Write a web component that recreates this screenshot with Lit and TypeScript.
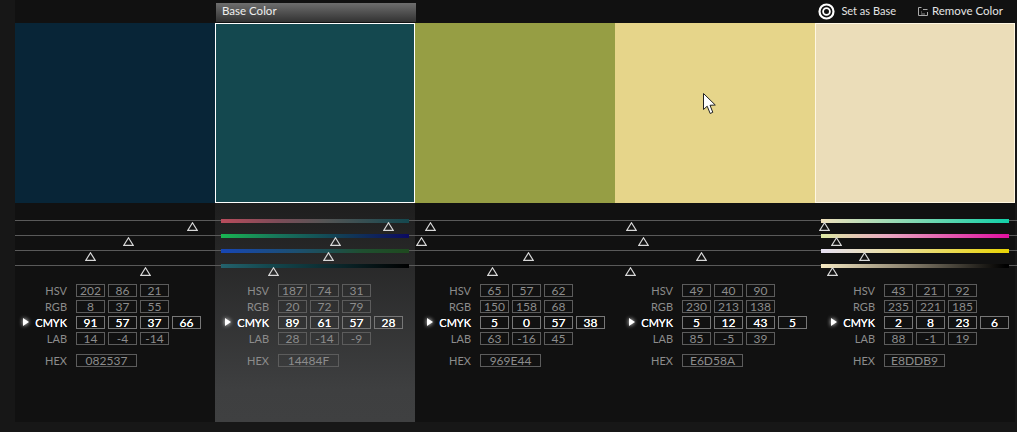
import { LitElement, html, css } from "lit";
import { customElement } from "lit/decorators.js";

interface Swatch {
  color: string;
  cls: string;
  thumbs: number[];
  bars?: string[];
  hsv: string[]; rgb: string[]; cmyk: string[]; lab: string[]; hex: string;
}

const SW: Swatch[] = [
  { color: "#082537", cls: "", thumbs: [177.5, 113.5, 75.5, 130.5], hsv: ["202","86","21"], rgb: ["8","37","55"], cmyk: ["91","57","37","66"], lab: ["14","-4","-14"], hex: "082537" },
  { color: "#14484f", cls: "sel", thumbs: [173.5, 120.5, 113.5, 58.5],
    bars: [
      "linear-gradient(90deg,#b84c5c,#7d4c58 30%,#555 55%,#14484f)",
      "linear-gradient(90deg,#19b552,#17755a 30%,#123c55 65%,#0b0a62)",
      "linear-gradient(90deg,#1746b4,#1c4f70 40%,#1f4f30 75%,#1f4a1f)",
      "linear-gradient(90deg,#24626c,#14484f 25%,#0a2428 65%,#000)",
    ],
    hsv: ["187","74","31"], rgb: ["20","72","79"], cmyk: ["89","61","57","28"], lab: ["28","-14","-9"], hex: "14484F" },
  { color: "#969e44", cls: "", thumbs: [15.5, 6.5, 113, 77], hsv: ["65","57","62"], rgb: ["150","158","68"], cmyk: ["5","0","57","38"], lab: ["63","-16","45"], hex: "969E44" },
  { color: "#e6d58a", cls: "", thumbs: [16, 28.5, 86.5, 15.5], hsv: ["49","40","90"], rgb: ["230","213","138"], cmyk: ["5","12","43","5"], lab: ["85","-5","39"], hex: "E6D58A" },
  { color: "#ebddb9", cls: "hov", thumbs: [9.5, 21.5, 49.5, 17.5],
    bars: [
      "linear-gradient(90deg,#efe0bc,#12d0a8)",
      "linear-gradient(90deg,#dde9a4,#e8a8c0 35%,#e010a0)",
      "linear-gradient(90deg,#e6e0f4,#eadfa8 35%,#e8d404)",
      "linear-gradient(90deg,#f5e8c2,#8c8370 45%,#000 98%)",
    ],
    hsv: ["43","21","92"], rgb: ["235","221","185"], cmyk: ["2","8","23","6"], lab: ["88","-1","19"], hex: "E8DDB9" },
];

@customElement("app-root")
export class AppRoot extends LitElement {
  static styles = css`
    :host {
      display: block;
      width: 1017px;
      height: 432px;
      overflow: hidden;
      background: #171717;
      font-family: Lato, "Open Sans", "Liberation Sans", sans-serif;
      font-size: 12px;
      color: #fff;
    }
    .top {
      height: 23px;
      margin-left: 15px;
      background: #111;
      display: flex;
      align-items: stretch;
    }
    .slot { width: 200px; }
    .tab {
      width: 200px;
      margin: 3px 0 1px 1px;
      box-sizing: border-box;
      padding: 0 0 4px 6px;
      display: flex;
      align-items: center;
      font-size: 11.5px;
      background: linear-gradient(#6e6e6e, #323232);
      color: #eee;
    }
    .actions {
      margin-left: auto;
      padding: 0 14px 1px 0;
      display: flex;
      align-items: center;
      color: #e4e4e4;
      font-size: 11.5px;
    }
    .action { display: flex; align-items: center; }
    .action span { padding-bottom: 2px; }
    .action.base { gap: 6px; margin-right: 22px; font-size: 11px; }
    .action.remove { gap: 4px; }
    .swatches { display: flex; margin-left: 15px; height: 180px; width: 1000px; }
    .swatch { width: 200px; box-sizing: border-box; position: relative; }
    .swatch.sel { border: 1px solid #fff; }
    .swatch.hov { border: 1px solid #fff7e2; }
    .cursor { position: absolute; left: 88px; top: 70px; }
    .cols { display: flex; margin-left: 15px; width: 1000px; height: 219px; background: #111; }
    .col { width: 200px; box-sizing: border-box; padding-top: 16px; }
    .col.sel { background: linear-gradient(#1e1e1e 0, #3e3f40 85%, #3f4041 100%); }
    .sliders { display: flex; flex-direction: column; gap: 12px; height: 60px; }
    .slider { position: relative; height: 3px; display: flex; align-items: center; }
    .line { flex: 1; height: 1px; background: #5a5a5a; }
    .col:last-child .line { margin-right: -2px; }
    .bar { position: absolute; left: 6px; right: 6px; top: 0; height: 3.5px; }
    .thumb { position: absolute; top: 3px; width: 11px; height: 9px; margin-left: -5.5px; display: block; z-index: 1; }
    .values {
      margin-top: 4px;
      display: flex;
      flex-direction: column;
      gap: 2px;
    }
    .row { display: flex; align-items: center; height: 14px; color: #8c8c8c; position: relative; }
    .lbl { width: 52px; text-align: right; margin-right: 9px; font-size: 11px; }
    .cell {
      box-sizing: border-box;
      width: 29px;
      height: 13px;
      margin-right: 3px;
      border: 1px solid #5c5c5c;
      display: flex;
      align-items: center;
      justify-content: center;
      color: #8c8c8c;
    }
    .row.active { color: #fff; }
    .row.active .lbl { text-shadow: 0 0 0.6px #fff; }
    .row.active .cell { color: #fff; text-shadow: 0 0 0.6px #fff; border-color: #777; }
    .row.hex { margin-top: 6px; }
    .row.hex .cell { width: 61px; }
    .dot {
      position: absolute;
      left: 8px;
      top: 3px;
      width: 0;
      height: 0;
      border-left: 6px solid #fff;
      border-top: 4px solid transparent;
      border-bottom: 4px solid transparent;
      filter: drop-shadow(0 0 2px #fff);
    }
  `;

  private row(label: string, vals: string[], cls = "") {
    return html`<div class="row ${cls}">
      ${cls === "active" ? html`<span class="dot"></span>` : ""}
      <span class="lbl">${label}</span>
      ${vals.map((v) => html`<span class="cell">${v}</span>`)}
    </div>`;
  }

  private thumb(x: number) {
    return html`<svg class="thumb" style="left:${x}px" viewBox="0 0 11 9" fill="none" stroke="#d8d8d8" stroke-width="1.2"><path d="M5.5 0.8 L10.3 8.4 H0.7 Z"/></svg>`;
  }

  render() {
    return html`
      <div class="top">
        <div class="slot"></div>
        <div class="tab">Base Color</div>
        <div class="actions">
          <div class="action base">
            <svg width="17" height="17" viewBox="0 0 17 17" fill="none" stroke="#fff">
              <circle cx="8.5" cy="8.5" r="7" stroke-width="2.2"/>
              <circle cx="8.5" cy="8.5" r="3.4" stroke-width="1.8"/>
            </svg>
            <span>Set as Base</span>
          </div>
          <div class="action remove">
            <svg width="10" height="10" viewBox="0 0 10 10" fill="none" stroke="#aaa">
              <path d="M3.5 1.5 H0.5 V9.5 H9.5 V6"/>
              <path d="M5 3.5 H9.5" />
              <path d="M3 6 H4 M3 8 H7" stroke-width="0.8"/>
            </svg>
            <span>Remove Color</span>
          </div>
        </div>
      </div>
      <div class="swatches">
        ${SW.map((s, i) => html`<div class="swatch ${s.cls}" style="background:${s.color}">
          ${i === 3 ? html`<svg class="cursor" width="14" height="22" viewBox="0 0 14 22">
            <path d="M0.5 0.5 V16.5 L4.2 13.2 L7.2 20.5 L9.8 19.3 L7 12.3 L12.3 12 Z" fill="#fff" stroke="#222" stroke-width="1"/>
          </svg>` : ""}
        </div>`)}
      </div>
      <div class="cols">
        ${SW.map((s, i) => html`<div class="col ${s.cls}">
          <div class="sliders">
            ${s.thumbs.map((t, j) => html`<div class="slider">
              <div class="line"></div>
              ${s.bars ? html`<div class="bar" style="background:${s.bars[j]}"></div>` : ""}
              ${this.thumb(t)}
            </div>`)}
          </div>
          <div class="values" style="padding-left:${i * 2}px">
            ${this.row("HSV", s.hsv)}
            ${this.row("RGB", s.rgb)}
            ${this.row("CMYK", s.cmyk, "active")}
            ${this.row("LAB", s.lab)}
            ${this.row("HEX", [s.hex], "hex")}
          </div>
        </div>`)}
      </div>
    `;
  }
}
